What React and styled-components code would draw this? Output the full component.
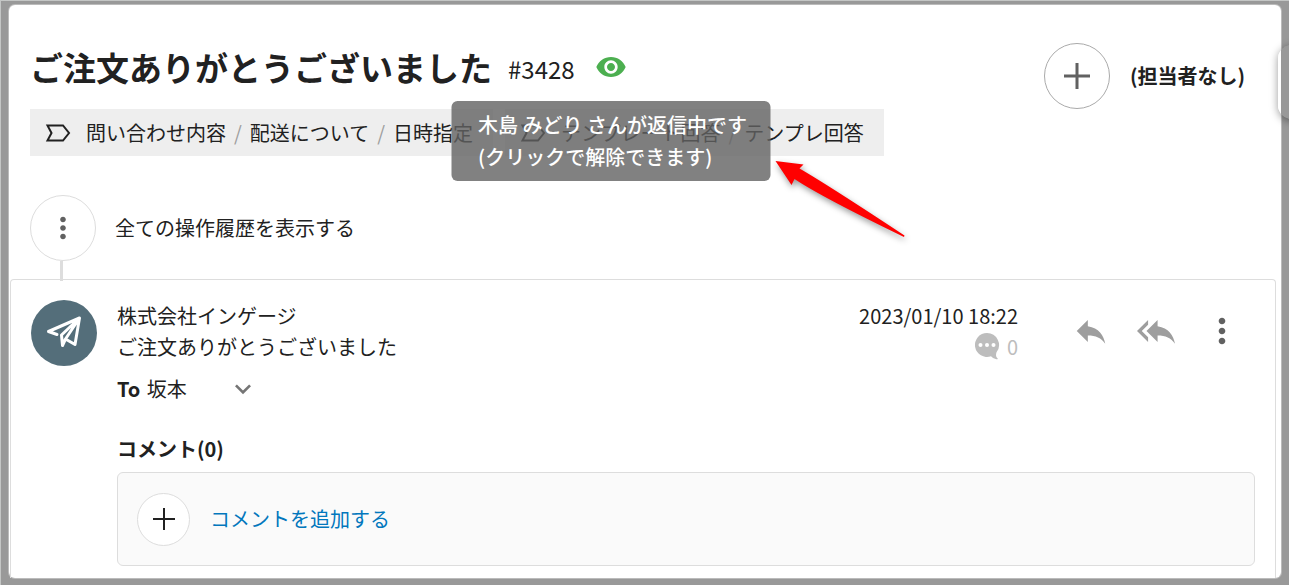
import React from 'react'
import styled, { createGlobalStyle } from 'styled-components';
import { MdRemoveRedEye, MdMoreVert, MdReply, MdReplyAll, MdKeyboardArrowDown } from 'react-icons/md';

const GlobalStyle = createGlobalStyle`
  * { box-sizing: border-box; }

  body {
    margin: 0;
    background: #999;
    color: #212121;
    font-family: 'Noto Sans CJK JP', 'Noto Sans', sans-serif;
    font-size: 20px;
    line-height: 32px;
  }

  h1, h2, p { margin: 0; }

  button {
    padding: 0;
    border: none;
    background: none;
    color: inherit;
    font: inherit;
    cursor: pointer;
  }

  svg { display: block; flex: none; }
`;

const PlusIcon = ({ size, color, weight = 2 }) => (
  <svg width={size} height={size} viewBox={`0 0 ${size} ${size}`} aria-hidden="true">
    <path
      d={`M${size / 2} 0V${size}M0 ${size / 2}H${size}`}
      stroke={color}
      strokeWidth={weight}
    />
  </svg>
);

const LabelIcon = () => (
  <svg width="26" height="20" viewBox="0 0 26 20" fill="none" stroke="#212121" strokeWidth="2" aria-hidden="true">
    <path d="M2.500 2.500H18L24 10L18 17.500H2.500L6.500 10Z" />
  </svg>
);

const SendIcon = () => (
  <svg width="38" height="38" viewBox="0 0 38 38" fill="none" stroke="#fff" strokeWidth="3" strokeLinejoin="round" strokeLinecap="round" aria-hidden="true">
    <path d="M12 20.500L3.500 17.500L34.500 4L30 30.500L20.500 25L17.500 31.500L16.500 21L34.500 4L20.500 25" />
  </svg>
);

const CommentIcon = () => (
  <svg width="25" height="27" viewBox="0 0 25 27" aria-hidden="true">
    <path d="M12 0a12 12 0 1 0 4 23.300q3 3.700 7 2.700q-3-2-1.500-6.700A12 12 0 0 0 12 0z" fill="#bdbdbd" />
    <g fill="#fff">
      <circle cx="5.500" cy="12" r="2" />
      <circle cx="12" cy="12" r="2" />
      <circle cx="18.500" cy="12" r="2" />
    </g>
  </svg>
);

const Category = ({ path }) => (
  <Tag>
    <LabelIcon />
    {path.map((name, i) => (
      <React.Fragment key={name}>
        {i > 0 && <Slash>/</Slash>}
        <span>{name}</span>
      </React.Fragment>
    ))}
  </Tag>
);

const App = () => {
  return (
    <Screen>
      <GlobalStyle />
      <SideTab aria-label="パネルを開く" />
      <Card>
        <Header>
          <Heading>
            <TitleRow>
              <h1>ご注文ありがとうございました</h1>
              <TicketNo>#3428</TicketNo>
              <Viewing>
                <button aria-label="返信中">
                  <MdRemoveRedEye size={32} color="#4caf50" />
                </button>
                <Tooltip role="tooltip">
                  木島 みどり さんが返信中です<br />
                  (クリックで解除できます)
                  <Arrow width="150" height="100" viewBox="0 0 150 100" aria-hidden="true">
                    <path d="M9 10L37 13.500L33 17.500Q60 33 138 84.500L137.500 86Q55 46 28 28L25 34Z" fill="#f00" />
                  </Arrow>
                </Tooltip>
              </Viewing>
            </TitleRow>
            <Tags>
              <Category path={['問い合わせ内容', '配送について', '日時指定']} />
              <Category path={['テンプレート回答', 'テンプレ回答']} />
            </Tags>
          </Heading>
          <Assignee>
            <Circle $border="#aaa" aria-label="担当者を選択">
              <PlusIcon size={26} color="#616161" weight={3} />
            </Circle>
            (担当者なし)
          </Assignee>
        </Header>

        <History>
          <Circle aria-label="操作履歴">
            <MdMoreVert size={34} color="#616161" />
          </Circle>
          全ての操作履歴を表示する
        </History>

        <Message>
          <Avatar>
            <SendIcon />
          </Avatar>
          <Content>
            <MessageHead>
              <div>
                <p>株式会社インゲージ</p>
                <p>ご注文ありがとうございました</p>
              </div>
              <Meta>
                <time>2023/01/10 18:22</time>
                <Count>
                  <CommentIcon />0
                </Count>
              </Meta>
              <Actions>
                <button aria-label="返信"><MdReply size={38} color="#9e9e9e" /></button>
                <button aria-label="全員に返信"><MdReplyAll size={38} color="#9e9e9e" /></button>
                <button aria-label="メニュー"><MdMoreVert size={40} color="#616161" /></button>
              </Actions>
            </MessageHead>
            <Recipient>
              <span><b>To</b> 坂本</span>
              <button aria-label="宛先を表示"><MdKeyboardArrowDown size={32} color="#757575" /></button>
            </Recipient>
            <h2>コメント(0)</h2>
            <CommentBox>
              <Circle $size={53} aria-label="コメントを追加">
                <PlusIcon size={22} color="#212121" />
              </Circle>
              <a href="#comment">コメントを追加する</a>
            </CommentBox>
          </Content>
        </Message>
      </Card>
    </Screen>
  );
}

const Screen = styled.div`
  position: relative;
  overflow: hidden;
  min-height: 100vh;
  padding: 4px 8px 6px;
  border-top: 1px solid #c4c6c5;
  border-left: 1px solid #c4c6c5;
`;

const Card = styled.main`
  background: #fff;
  border-radius: 6px;
  padding: 0 1px;
  box-shadow: 0 0 0 1px #bbb;
`;

/* handle of the side panel, tucked behind the right edge */
const SideTab = styled.button`
  position: absolute;
  top: 44px;
  right: -30px;
  width: 41px;
  height: 74px;
  && { background: linear-gradient(to right, #fff 3px, #999 3px); }
  border-radius: 14px;
  box-shadow: 0 2px 8px rgba(0, 0, 0, 0.4);
`;

const Header = styled.header`
  display: flex;
  justify-content: space-between;
  padding: 38px 35px 0 20px;
`;

const Heading = styled.div`
  display: flex;
  flex-direction: column;
  gap: 18px;
`;

const TitleRow = styled.div`
  display: flex;
  align-items: center;

  h1 {
    font-size: 33px;
    line-height: 48px;
    font-weight: 700;
  }
`;

const TicketNo = styled.span`
  margin: 4px 20px 0 16px;
  font-size: 24px;
`;

const Viewing = styled.div`
  position: relative;

  > button { display: block; }
`;

const Tooltip = styled.div`
  position: absolute;
  z-index: 2;
  top: 50px;
  left: 50%;
  transform: translateX(-50%);
  width: 319px;
  padding: 8px 27px;
  border-radius: 6px;
  background: rgba(97, 97, 97, 0.8);
  color: #fff;
  font-weight: 500;
  white-space: nowrap;
`;

const Arrow = styled.svg`
  position: absolute;
  top: 50px;
  left: 315px;
  filter: drop-shadow(1px 3px 3px rgba(0, 0, 0, 0.4));
`;

const Tags = styled.div`
  display: flex;
  gap: 12px;
`;

const Tag = styled.div`
  display: flex;
  align-items: center;
  height: 47px;
  padding: 0 20px 0 15px;
  background: #eee;
  white-space: nowrap;

  svg { margin-right: 15px; }
`;

const Slash = styled.span`
  margin: 0 8px;
  color: #9e9e9e;
`;

const Assignee = styled.div`
  display: flex;
  align-items: center;
  align-self: flex-start;
  gap: 20px;
  font-weight: 700;
  white-space: nowrap;
`;

const Circle = styled.button`
  display: flex;
  flex: none;
  align-items: center;
  justify-content: center;
  width: ${({ $size = 66 }) => $size}px;
  height: ${({ $size = 66 }) => $size}px;
  && {
    border: 1px solid ${({ $border = '#ddd' }) => $border};
    background: #fff;
  }
  border-radius: 50%;
`;

const History = styled.div`
  position: relative;
  display: flex;
  align-items: center;
  gap: 19px;
  margin-top: 39px;
  padding: 0 20px 18px;

  /* timeline joining the history to the first message */
  &::after {
    content: '';
    position: absolute;
    left: 50px;
    bottom: -2px;
    width: 3px;
    height: 20px;
    background: #ddd;
  }
`;

const Message = styled.article`
  display: flex;
  gap: 20px;
  padding: 20px 20px 12px;
  border: 1px solid #ddd;
  border-bottom: none;
  border-radius: 4px 4px 0 0;
  margin-right: 4px;
`;

const Avatar = styled.div`
  display: flex;
  flex: none;
  align-items: center;
  justify-content: center;
  width: 66px;
  height: 66px;
  border-radius: 50%;
  background: #546e7a;
`;

const Content = styled.div`
  flex: 1;

  h2 {
    margin-top: 28px;
    font-size: 20px;
    font-weight: 700;
  }
`;

const MessageHead = styled.div`
  display: flex;
  line-height: 31px;
`;

const Meta = styled.div`
  margin-left: auto;
  text-align: right;
`;

const Count = styled.div`
  display: flex;
  align-items: center;
  justify-content: flex-end;
  gap: 7px;
  color: #bdbdbd;
`;

const Actions = styled.div`
  display: flex;
  align-items: center;
  gap: 27px;
  margin: 0 13px 0 54px;
`;

const Recipient = styled.div`
  display: flex;
  align-items: center;
  gap: 40px;
  margin-top: 11px;

  b { margin-right: 2px; }
`;

const CommentBox = styled.div`
  display: flex;
  align-items: center;
  gap: 20px;
  height: 94px;
  margin-top: 7px;
  padding: 0 19px;
  border: 1px solid #ddd;
  border-radius: 6px;
  background: #fafafa;

  a {
    color: #0277bd;
    text-decoration: none;
  }
`;

export default App;
